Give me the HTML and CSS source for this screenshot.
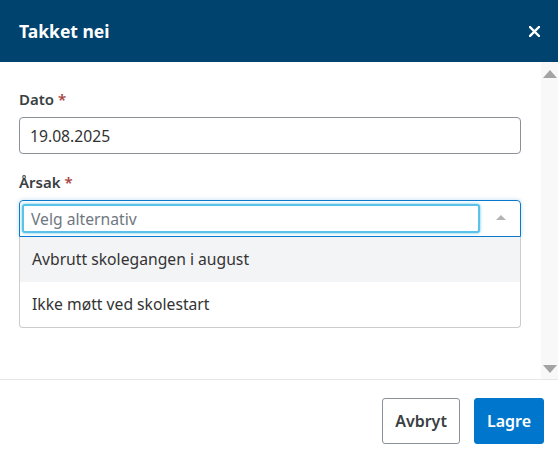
FILE: index.html
```html
<!DOCTYPE html>
<html lang="no">
<head>
  <meta charset="UTF-8">
  <title>Takket nei</title>
  <link rel="stylesheet" href="styles.css">
</head>
<body>
  <div class="modal">
    <header class="modal-header">
      <h1>Takket nei</h1>
      <button class="close" aria-label="Lukk">
        <svg width="11" height="11" viewBox="0 0 11 11"><path d="M1 1 L10 10 M10 1 L1 10" stroke="#fff" stroke-width="2.4" stroke-linecap="square"/></svg>
      </button>
    </header>
    <div class="modal-body">
      <main class="body-content">
        <div class="field">
          <label>Dato <span class="req">*</span></label>
          <input class="text-input" type="text" value="19.08.2025">
        </div>
        <div class="field">
          <label>Årsak <span class="req">*</span></label>
          <div class="select open">
            <div class="select-head">
              <input class="search" type="text" placeholder="Velg alternativ">
              <span class="arrow"></span>
            </div>
            <ul class="options">
              <li class="active">Avbrutt skolegangen i august</li>
              <li>Ikke møtt ved skolestart</li>
            </ul>
          </div>
        </div>
      </main>
      <div class="scrollbar">
        <span class="scroll-up"></span>
        <span class="scroll-down"></span>
      </div>
    </div>
    <footer class="modal-footer">
      <button class="btn btn-default">Avbryt</button>
      <button class="btn btn-primary">Lagre</button>
    </footer>
  </div>
</body>
</html>
```

FILE: styles.css
```css
body {
  margin: 0;
  font-family: "Noto Sans", "Open Sans", sans-serif;
  color: #333;
  background: #fff;
}

.modal {
  display: flex;
  flex-direction: column;
  height: 460px;
}

.modal-header {
  background-color: #00436e;
  color: #fff;
  height: 62px;
  display: flex;
  align-items: center;
  justify-content: space-between;
  padding: 0 18px 0 19px;
  box-sizing: border-box;
}

.modal-header h1 {
  margin: 0;
  font-size: 17.5px;
  font-weight: bold;
}

.close {
  background: none;
  border: 0;
  padding: 0;
  display: flex;
}

.modal-body {
  height: 317px;
  display: flex;
}

.body-content {
  flex: 1;
  padding: 26px 20px 0 19px;
}

.scrollbar {
  width: 17px;
  background: #f8f8f8;
  display: flex;
  flex-direction: column;
  justify-content: space-between;
  align-items: center;
  padding: 8px 0 6px;
  box-sizing: border-box;
}

.scroll-up,
.scroll-down {
  width: 0;
  height: 0;
  border-left: 7px solid transparent;
  border-right: 7px solid transparent;
}

.scroll-up {
  border-bottom: 8px solid #a3a3a3;
}

.scroll-down {
  border-top: 8px solid #a3a3a3;
}

.field {
  margin-bottom: 17px;
}

.field label {
  display: block;
  font-size: 15px;
  font-weight: 600;
  line-height: 22px;
  color: #3a3f44;
  margin-bottom: 7px;
}

.req {
  color: #a94442;
}

.text-input {
  display: block;
  width: 100%;
  height: 37px;
  box-sizing: border-box;
  border: 1px solid #8a9199;
  border-radius: 4px;
  padding: 0 10px;
  font-family: inherit;
  font-size: 15.7px;
  color: #333;
}

.select {
  position: relative;
}

.select-head {
  height: 37px;
  box-sizing: border-box;
  border: 1px solid #0a78cc;
  border-radius: 4px 4px 0 0;
  display: flex;
  align-items: center;
  padding: 0 14px 0 2px;
  box-shadow: 0 0 4px rgba(10, 120, 204, 0.25);
}

.search {
  width: 458px;
  height: 29px;
  box-sizing: border-box;
  border: 2px solid #5bc3e8;
  border-radius: 3px;
  box-shadow: 0 0 3px #5bc3e8;
  padding: 0 7px;
  font-family: inherit;
  font-size: 15.7px;
  outline: none;
}

.search::placeholder {
  color: #6f777f;
}

.arrow {
  margin-left: auto;
  width: 0;
  height: 0;
  border-left: 5px solid transparent;
  border-right: 5px solid transparent;
  border-bottom: 5px solid #b4b4b4;
  margin-top: -2px;
}

.options {
  position: absolute;
  left: 0;
  right: 0;
  top: 37px;
  margin: 0;
  padding: 0;
  list-style: none;
  background: #fff;
  border: 1px solid #ccc;
  border-top: 0;
  border-radius: 0 0 4px 4px;
}

.options li {
  height: 45px;
  line-height: 45px;
  padding-left: 12px;
  font-size: 15.7px;
  color: #333;
}

.options li.active {
  background-color: #f3f4f6;
}

.modal-footer {
  flex: 1;
  border-top: 1px solid #e6e6e6;
  display: flex;
  justify-content: flex-end;
  align-items: flex-start;
  gap: 14px;
  padding: 18px 14px 0 0;
}

.btn {
  height: 46px;
  border-radius: 3px;
  font-family: inherit;
  font-size: 16px;
  font-weight: 600;
  padding: 0 12px;
}

.btn-default {
  background: #fff;
  border: 1px solid #8a9199;
  color: #3a3f44;
}

.btn-primary {
  background: #0077cc;
  border: 1px solid #0077cc;
  color: #fff;
}
```
